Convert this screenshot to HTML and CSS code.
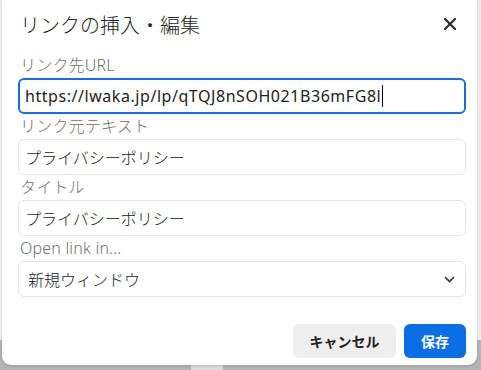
FILE: index.html
```html
<!DOCTYPE html>
<html lang="ja">
<head>
    <meta charset="UTF-8">
    <meta name="viewport" content="width=device-width, initial-scale=1.0">
    <title>リンクの挿入・編集</title>
    <link rel="stylesheet" href="styles.css">
</head>
<body>
    <div class="dialog">
        <div class="dialog-header">
            <div class="title">リンクの挿入・編集</div>
            <button class="close" aria-label="閉じる">
                <svg width="12" height="12" viewBox="0 0 12 12">
                    <path d="M1 1 L11 11 M11 1 L1 11" stroke="#2b2b2b" stroke-width="2.2" stroke-linecap="round"/>
                </svg>
            </button>
        </div>

        <div class="form-group">
            <label for="url">リンク先URL</label>
            <div class="input focused"><span>https://lwaka.jp/lp/qTQJ8nSOH021B36mFG8l</span><span class="caret"></span></div>
        </div>

        <div class="form-group">
            <label for="text">リンク元テキスト</label>
            <div class="input">プライバシーポリシー</div>
        </div>

        <div class="form-group">
            <label for="title">タイトル</label>
            <div class="input">プライバシーポリシー</div>
        </div>

        <div class="form-group">
            <label for="target">Open link in...</label>
            <div class="input select">
                <span>新規ウィンドウ</span>
                <svg width="11" height="7" viewBox="0 0 11 7">
                    <path d="M1 1 L5.5 5.5 L10 1" fill="none" stroke="#333" stroke-width="1.6"/>
                </svg>
            </div>
        </div>

        <div class="dialog-footer">
            <button class="button cancel">キャンセル</button>
            <button class="button save">保存</button>
        </div>
    </div>
</body>
</html>
```

FILE: styles.css
```css
html {
    height: 100%;
}
body {
    font-family: "Noto Sans", "Noto Sans CJK JP", sans-serif;
    margin: 0;
    padding: 0 4px 0 2px;
    height: 370px;
    overflow: hidden;
    background:
        linear-gradient(#dcdcdc, #dcdcdc) 191px 365px / 32px 5px no-repeat,
        linear-gradient(to bottom, #eeeeee 340px, #b4b4b4 340px);
}
.dialog {
    background: #fff;
    border-radius: 0 0 9px 9px;
    padding: 9px 11px 7px 16px;
    box-shadow: 0 1px 3px rgba(0, 0, 0, 0.15);
}
.dialog-header {
    display: flex;
    justify-content: space-between;
    align-items: center;
    height: 30px;
    margin-bottom: 17px;
}
.title {
    font-family: "Noto Sans CJK JP", sans-serif;
    font-size: 20px;
    font-weight: 300;
    color: #222;
    padding-left: 2px;
}
.close {
    border: none;
    background: none;
    padding: 0;
    margin-right: 10px;
    width: 12px;
    height: 12px;
    display: flex;
}
.form-group {
    margin-bottom: 3px;
}
.form-group label {
    display: block;
    font-family: "Noto Sans", "Noto Sans CJK JP", sans-serif;
    font-weight: 300;
    font-size: 16px;
    line-height: 18px;
    padding-bottom: 4px;
    color: #707070;
    padding-left: 2px;
    letter-spacing: 0.2px;
}
.input {
    box-sizing: border-box;
    height: 36px;
    border: 1px solid #e6e6e6;
    border-radius: 6px;
    padding: 0 6px;
    display: flex;
    align-items: center;
    font-size: 16px;
    color: #222;
    font-family: "Noto Sans CJK JP", sans-serif;
    font-weight: 300;
}
.input.focused {
    border: 2px solid #1a6fd6;
    padding: 0 5px;
    font-family: "Noto Sans", sans-serif;
    font-weight: 400;
    letter-spacing: 0.55px;
}
.caret {
    display: inline-block;
    width: 1px;
    height: 22px;
    background: #111;
    margin-left: 1px;
}
.select {
    justify-content: space-between;
    padding: 0 10px 0 9px;
}
.dialog-footer {
    display: flex;
    justify-content: flex-end;
    gap: 8px;
    margin-top: 27px;
}
.button {
    font-family: "Noto Sans CJK JP", sans-serif;
    font-size: 14px;
    font-weight: 700;
    height: 34px;
    border: none;
    border-radius: 6px;
    cursor: pointer;
}
.cancel {
    background: #efefef;
    color: #222;
    padding: 0 14px;
    width: 103px;
}
.save {
    background: #0b6fe3;
    color: #fff;
    width: 62px;
}
```
